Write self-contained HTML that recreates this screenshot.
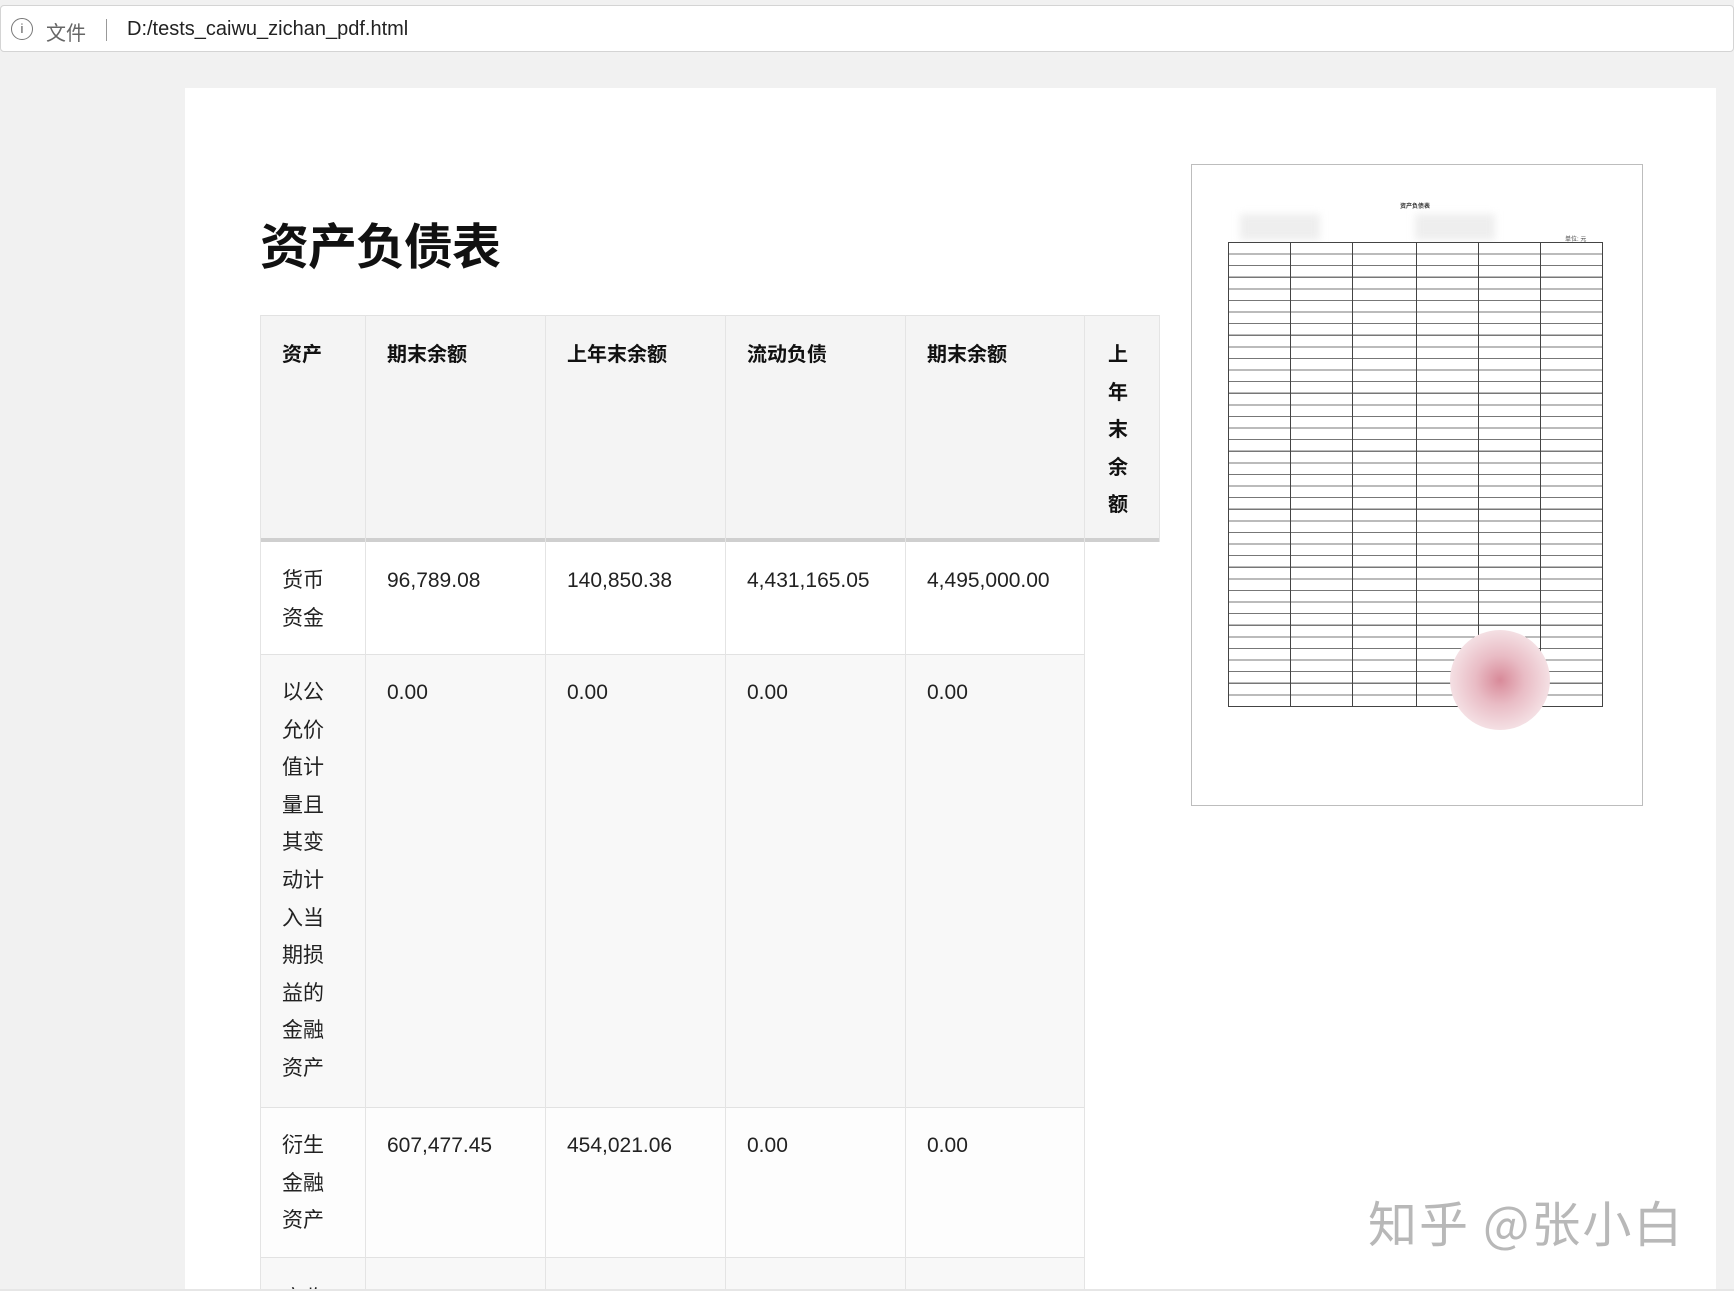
<!DOCTYPE html>
<html><head><meta charset="utf-8"><style>
*{margin:0;padding:0;box-sizing:border-box}
html,body{width:1734px;height:1291px;overflow:hidden;background:#f1f1f1}
#w{position:relative;width:1734px;height:1291px;overflow:hidden;font-family:"Liberation Sans","Noto Sans CJK SC",sans-serif;color:#222}
.bar{position:absolute;left:0;top:5px;width:1734px;height:47px;background:#fff;border:1px solid #d4d4d4;border-radius:4px}
.page{position:absolute;left:185px;top:88px;width:1531px;height:1201px;background:#fff}
.a{position:absolute}
.h1{left:260px;top:208px;font-size:49px;font-weight:bold;font-family:"Noto Sans CJK SC",sans-serif;color:#111;letter-spacing:-1px}
.cell{position:absolute;font-size:21px;line-height:37.6px;padding-left:22px;font-family:"Liberation Sans","Noto Sans CJK SC",sans-serif;color:#222;white-space:nowrap}
.hd{font-weight:bold;font-family:"Noto Sans CJK SC",sans-serif;font-size:20px;line-height:37.6px;color:#111}
.vl{position:absolute;width:1px;background:#e4e4e4}
.wm{left:1368px;top:1186px;font-size:49px;color:#b8b8b8;font-family:"Noto Sans CJK SC",sans-serif;letter-spacing:2px}
</style></head><body><div id="w">
<div class="bar"></div>
<div class="a" style="left:11px;top:18px;width:22px;height:22px;border:1.5px solid #777;border-radius:50%;font-size:13px;text-align:center;line-height:19px;color:#555">i</div>
<div class="a" style="left:46px;top:17px;font-size:20px;color:#666;font-family:'Noto Sans CJK SC',sans-serif">文件</div>
<div class="a" style="left:106px;top:19px;width:1px;height:22px;background:#999"></div>
<div class="a" style="left:127px;top:18px;font-size:20px;color:#222">D:/tests_caiwu_zichan_pdf.html</div>
<div class="page"></div>
<div class="a h1">资产负债表</div>

<div class="a" style="left:260px;top:315px;width:900px;height:227px;background:#f4f4f4;border-top:1px solid #e2e2e2;border-bottom:4px solid #cfcfcf"></div>
<div class="a" style="left:260px;top:542px;width:824px;height:113px;background:#fff;border-bottom:1px solid #e2e2e2"></div>
<div class="a" style="left:260px;top:655px;width:824px;height:453px;background:#f8f8f8;border-bottom:1px solid #e2e2e2"></div>
<div class="a" style="left:260px;top:1108px;width:824px;height:150px;background:#fdfdfd;border-bottom:1px solid #e2e2e2"></div>
<div class="a" style="left:260px;top:1258px;width:824px;height:31px;background:#f8f8f8"></div>

<div class="vl" style="left:260px;top:315px;height:974px"></div>
<div class="vl" style="left:365px;top:315px;height:974px"></div>
<div class="vl" style="left:545px;top:315px;height:974px"></div>
<div class="vl" style="left:725px;top:315px;height:974px"></div>
<div class="vl" style="left:905px;top:315px;height:974px"></div>
<div class="vl" style="left:1084px;top:315px;height:974px"></div>
<div class="vl" style="left:1159px;top:315px;height:227px"></div>

<div class="cell hd" style="left:260px;top:334px">资产</div>
<div class="cell hd" style="left:365px;top:334px">期末余额</div>
<div class="cell hd" style="left:545px;top:334px">上年末余额</div>
<div class="cell hd" style="left:725px;top:334px">流动负债</div>
<div class="cell hd" style="left:905px;top:334px">期末余额</div>
<div class="cell hd" style="left:1084px;top:334px;padding-left:24px">上<br>年<br>末<br>余<br>额</div>

<div class="cell" style="left:260px;top:562px">货币<br>资金</div>
<div class="cell" style="left:365px;top:562px">96,789.08</div>
<div class="cell" style="left:545px;top:562px">140,850.38</div>
<div class="cell" style="left:725px;top:562px">4,431,165.05</div>
<div class="cell" style="left:905px;top:562px">4,495,000.00</div>

<div class="cell" style="left:260px;top:674px">以公<br>允价<br>值计<br>量且<br>其变<br>动计<br>入当<br>期损<br>益的<br>金融<br>资产</div>
<div class="cell" style="left:365px;top:674px">0.00</div>
<div class="cell" style="left:545px;top:674px">0.00</div>
<div class="cell" style="left:725px;top:674px">0.00</div>
<div class="cell" style="left:905px;top:674px">0.00</div>

<div class="cell" style="left:260px;top:1127px">衍生<br>金融<br>资产</div>
<div class="cell" style="left:365px;top:1127px">607,477.45</div>
<div class="cell" style="left:545px;top:1127px">454,021.06</div>
<div class="cell" style="left:725px;top:1127px">0.00</div>
<div class="cell" style="left:905px;top:1127px">0.00</div>

<div class="cell" style="left:260px;top:1280px">应收</div>
<div class="cell" style="left:365px;top:1280px">578,208.82</div>
<div class="cell" style="left:545px;top:1280px">828,177.68</div>
<div class="cell" style="left:725px;top:1280px">11,887,606.94</div>
<div class="cell" style="left:905px;top:1280px">12,446,932.04</div>

<div class="a" style="left:1191px;top:164px;width:452px;height:642px;background:#fff;border:1px solid #bdbdbd"></div>
<div class="a" style="left:1400px;top:201px;font-size:6px;font-weight:bold;color:#333">资产负债表</div>
<div class="a" style="left:1240px;top:214px;width:80px;height:26px;background:#eee;filter:blur(4px)"></div>
<div class="a" style="left:1415px;top:214px;width:80px;height:26px;background:#eee;filter:blur(4px)"></div>
<div class="a" style="left:1565px;top:234px;font-size:6px;color:#444">单位: 元</div>
<div class="a" style="left:1228px;top:242px;width:375px;height:465px;border:1px solid #444;background:repeating-linear-gradient(to bottom,#fff 0,#fff 10.5px,#777 10.5px,#777 11.6px)"></div>
<div class="a" style="left:1290px;top:242px;width:1px;height:465px;background:#444"></div>
<div class="a" style="left:1352px;top:242px;width:1px;height:465px;background:#444"></div>
<div class="a" style="left:1416px;top:242px;width:1px;height:465px;background:#444"></div>
<div class="a" style="left:1478px;top:242px;width:1px;height:465px;background:#444"></div>
<div class="a" style="left:1540px;top:242px;width:1px;height:465px;background:#444"></div>
<div class="a" style="left:1450px;top:630px;width:100px;height:100px;border-radius:50%;background:radial-gradient(circle,#d88a99 0,#e9bcc5 35%,#f4dfe3 70%,rgba(255,255,255,0) 100%)"></div>

<div class="a wm">知乎 @张小白</div>
<div class="a" style="left:0;top:1289px;width:1734px;height:2px;background:#e6e6e6"></div>
</div></body></html>
